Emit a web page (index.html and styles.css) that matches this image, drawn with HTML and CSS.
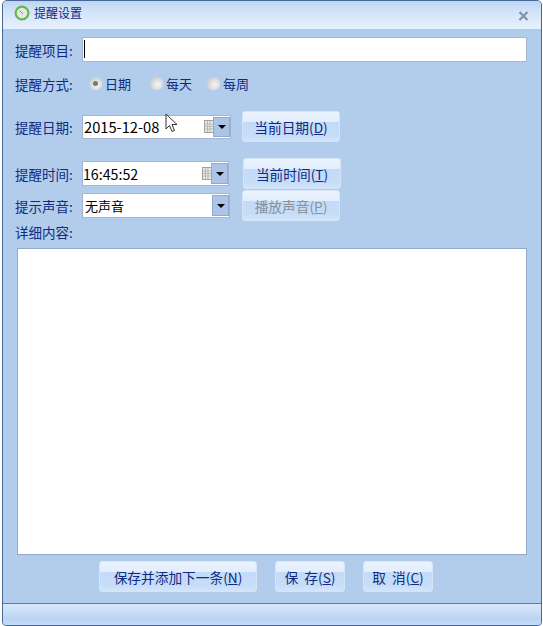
FILE: index.html
```html
<!DOCTYPE html>
<html lang="zh-CN">
<head>
<meta charset="utf-8">
<title>提醒设置</title>
<link rel="stylesheet" href="styles.css">
</head>
<body>
<div class="window">
  <header class="titlebar">
    <svg class="clock" width="16" height="16" viewBox="0 0 16 16"><circle cx="8" cy="8" r="6.4" fill="#e6e8e4" stroke="#62b84c" stroke-width="2.2"/><path d="M8 8 5.5 5.5M8 8l1 1" stroke="#6a6a6a" stroke-width=".8" fill="none"/></svg>
    <span class="title">提醒设置</span>
    <svg class="close" width="11" height="10" viewBox="0 0 11 10"><path d="M1.5 1 9.5 9M9.5 1 1.5 9" stroke="#7f93ad" stroke-width="2.2" fill="none"/></svg>
  </header>
  <main class="content">
    <div class="row row-item">
      <label class="label">提醒项目:</label>
      <div class="textbox"><span class="caret"></span></div>
    </div>
    <div class="row row-mode">
      <label class="label">提醒方式:</label>
      <div class="radio radio-1"><span class="dot checked"></span><span>日期</span></div>
      <div class="radio radio-2"><span class="dot"></span><span>每天</span></div>
      <div class="radio radio-3"><span class="dot"></span><span>每周</span></div>
    </div>
    <div class="row row-date">
      <label class="label">提醒日期:</label>
      <div class="field field-date">
        <span class="value value-date">2015-12-08</span>
        <svg class="cal" width="10" height="13" viewBox="0 0 10 13"><rect x=".5" y=".5" width="9" height="12" fill="#e9e9e6" stroke="#a2a29c"/><path d="M1 4h8M1 6.5h8M1 9h8M3.5 1v11M6 1v11" stroke="#b0b0aa" stroke-width=".8"/></svg>
        <span class="drop"><i class="arrow"></i></span>
      </div>
      <button class="btn btn-date">当前日期(<u>D</u>)</button>
    </div>
    <div class="row row-time">
      <label class="label">提醒时间:</label>
      <div class="field field-time">
        <span class="value value-time">16:45:52</span>
        <svg class="cal" width="10" height="13" viewBox="0 0 10 13"><rect x=".5" y=".5" width="9" height="12" fill="#e9e9e6" stroke="#a2a29c"/><path d="M1 4h8M1 6.5h8M1 9h8M3.5 1v11M6 1v11" stroke="#b0b0aa" stroke-width=".8"/></svg>
        <span class="drop"><i class="arrow"></i></span>
      </div>
      <button class="btn btn-time">当前时间(<u>T</u>)</button>
    </div>
    <div class="row row-sound">
      <label class="label">提示声音:</label>
      <div class="field field-sound">
        <span class="value value-sound">无声音</span>
        <span class="drop"><i class="arrow"></i></span>
      </div>
      <button class="btn btn-sound" disabled>播放声音(<u>P</u>)</button>
    </div>
    <div class="row row-detail"><label class="label">详细内容:</label></div>
    <div class="memo"></div>
    <div class="actions">
      <button class="btn btn-next">保存并添加下一条(<u>N</u>)</button>
      <button class="btn btn-save">保  存(<u>S</u>)</button>
      <button class="btn btn-cancel">取  消(<u>C</u>)</button>
    </div>
  </main>
  <footer class="statusbar"></footer>
  <svg class="cursor" width="14" height="21" viewBox="0 0 14 21"><path d="M1 1v15l3.5-3.5 2.5 6 2.5-1-2.5-6H12Z" fill="#fff" stroke="#333" stroke-width="1"/></svg>
</div>
</body>
</html>
```
FILE: styles.css
```css
html, body {
  margin: 0;
  padding: 0;
  background: #fff;
}
body {
  width: 543px;
  height: 626px;
  overflow: hidden;
  font-family: "Noto Sans CJK SC", "Liberation Sans", sans-serif;
  font-size: 13.5px;
  color: #0f2a80;
}
.window {
  position: relative;
  box-sizing: border-box;
  width: 540px;
  height: 626px;
  margin-left: 2px;
  display: flex;
  flex-direction: column;
  background: #b2cdeb;
  border: 1px solid #47699a;
  border-radius: 5px 5px 4px 4px;
  overflow: hidden;
}
.titlebar {
  flex: none;
  box-sizing: border-box;
  height: 30px;
  display: flex;
  align-items: center;
  padding: 0 12px 5px 11px;
  background: linear-gradient(#bdd4f1 0, #d2e3f8 35%, #dceafb 70%, #e8f2fd 100%);
  border-bottom: 2px solid #a8cdf0;
}
.clock { flex: none; }
.title {
  margin-left: 4px;
  font-size: 12px;
  color: #0f2a80;
}
.close { margin: 6px 0 0 auto; }
.content {
  flex: 1;
  min-height: 0;
  display: flex;
  flex-direction: column;
  padding-left: 12px;
}
.row {
  display: flex;
  align-items: center;
}
.label {
  flex: none;
  width: 67px;
  line-height: 18px;
}
.row-item { margin-top: 6px; height: 25px; }
.textbox {
  box-sizing: border-box;
  width: 445px;
  height: 25px;
  background: #fff;
  border: 1px solid #a5b4cf;
  padding: 2px 0 0 1px;
}
.caret {
  display: block;
  width: 1px;
  height: 18px;
  background: #000;
}
.row-mode { margin-top: 9px; height: 25px; }
.radio {
  display: flex;
  align-items: center;
  font-size: 13px;
}
.dot {
  position: relative;
  box-sizing: border-box;
  width: 13px;
  height: 13px;
  border-radius: 50%;
  margin-right: 3px;
  background: radial-gradient(circle at 60% 60%, #f6f6f6 0, #d8d8d8 55%, #a9adb3 100%);
  box-shadow: 0 0 1px #e8eef6;
}
.dot.checked::after {
  content: "";
  position: absolute;
  left: 4px;
  top: 4px;
  width: 5px;
  height: 5px;
  border-radius: 50%;
  background: #777;
}
.radio-1 { margin-left: 7px; }
.radio-2 { margin-left: 19px; }
.radio-3 { margin-left: 15px; }
.field {
  position: relative;
  flex: none;
  box-sizing: border-box;
  display: flex;
  align-items: center;
  background: #fff;
  border: 1px solid #a5b4cf;
  color: #000;
}
.value { line-height: 18px; }
.value-date { margin-left: 1px; font-size: 14.7px; }
.value-time { font-size: 14.2px; }
.value-sound { margin-left: 2px; font-size: 13px; }
.cal { margin-left: auto; flex: none; }
.drop {
  flex: none;
  box-sizing: border-box;
  width: 17px;
  align-self: stretch;
  margin: 1px 0;
  display: flex;
  align-items: center;
  justify-content: center;
  background: #abc5e8;
  border: 1px solid #8fa9d0;
}
.cal + .drop { margin-left: -1px; }
.field-sound .drop { margin-left: auto; }
.arrow {
  width: 0;
  height: 0;
  border-left: 4px solid transparent;
  border-right: 4px solid transparent;
  border-top: 4px solid #000;
}
.btn {
  flex: none;
  box-sizing: border-box;
  height: 31px;
  padding: 0;
  border: 1px solid #d5e4f7;
  border-radius: 3px;
  font: inherit;
  font-size: 13.7px;
  color: #0f2a80;
  background: linear-gradient(#eaf3fe 0, #e3eefc 33%, #c3dbf8 36%, #c6ddf9 80%, #d3e5fb 100%);
  white-space: pre;
}
.btn:disabled { color: #8a8f98; }
.row-date { margin-top: 15px; height: 31px; }
.field-date { width: 149px; height: 24px; }
.btn-date { width: 98px; margin-left: 11px; }
.row-time { margin-top: 16px; height: 31px; }
.field-time { width: 147px; height: 25px; }
.btn-time { width: 98px; margin-left: 14px; }
.row-sound { margin-top: 1px; height: 31px; }
.field-sound { width: 148px; height: 25px; }
.btn-sound { width: 98px; margin-left: 12px; }
.row-detail { margin-top: 2px; height: 18px; }
.memo {
  flex: none;
  box-sizing: border-box;
  width: 510px;
  height: 307px;
  margin: 7px 0 0 2px;
  background: #fff;
  border: 1px solid #93abc9;
}
.actions {
  display: flex;
  margin: 6px 0 0 84px;
  gap: 18px;
}
.btn-next { width: 158px; }
.btn-save, .btn-cancel { width: 70px; }
.statusbar {
  flex: none;
  box-sizing: border-box;
  height: 22px;
  border-top: 1px solid #4f7cbd;
  background: linear-gradient(#d9e7fa 0, #c7dcf7 45%, #bcd4f3 70%, #c6daf5 100%);
}
.cursor {
  position: absolute;
  left: 162px;
  top: 112px;
}
```
